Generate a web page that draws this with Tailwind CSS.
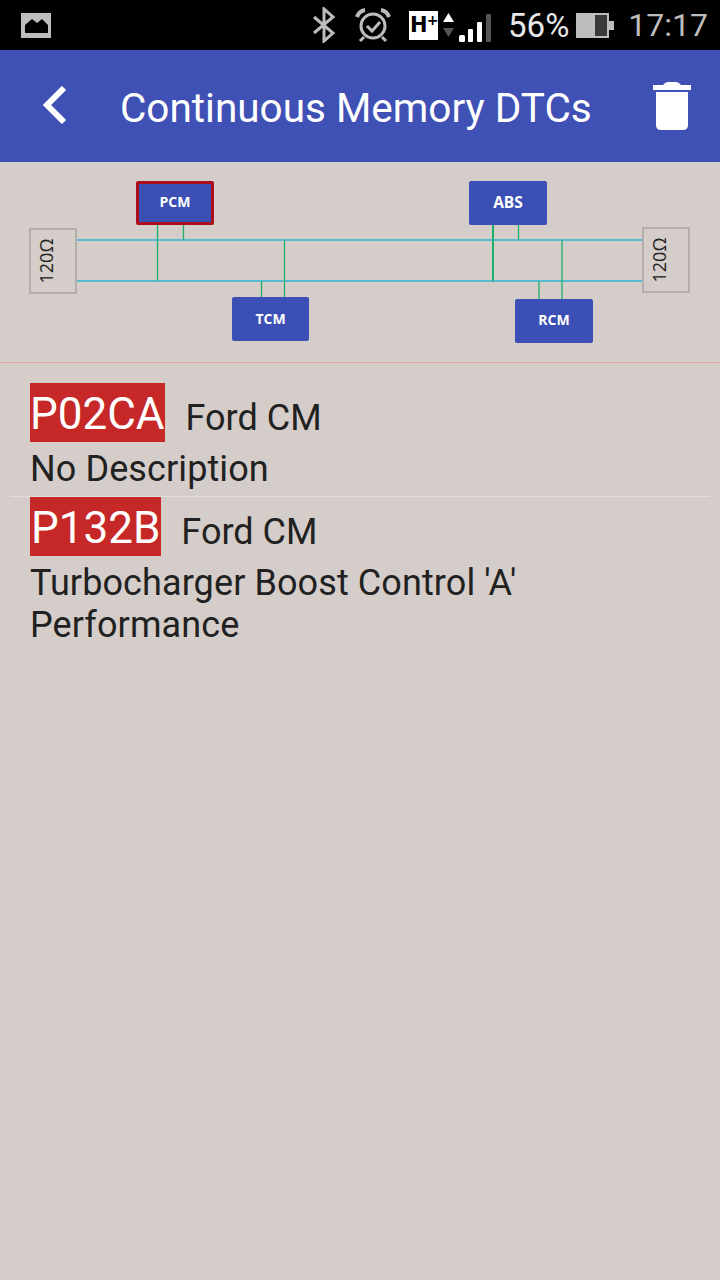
<!DOCTYPE html>
<html lang="en">
<head>
    <meta charset="UTF-8">
    <meta name="viewport" content="width=device-width, initial-scale=1.0">
    <title>Continuous Memory DTCs</title>
    <script src="https://cdn.jsdelivr.net/npm/@tailwindcss/browser@4"></script>
</head>
<body class="bg-[#d5cdc9] font-['Roboto',sans-serif] text-[#212121]">
<div class="w-[720px] h-[1280px] overflow-hidden flex flex-col">

    <!-- Status bar -->
    <div class="h-[50px] bg-black flex items-center pl-[21px] pr-[12px] text-[#bdbdbd]">
        <svg width="30" height="25" viewBox="0 0 30 25"><path fill="#bdbdbd" fill-rule="evenodd" d="M0 0h30v25H0zM4 20h23v-8l-6-6-5 4-5-4-7 6z"/></svg>
        <svg class="ml-auto" width="24" height="36" viewBox="0 0 24 36"><path fill="none" stroke="#bdbdbd" stroke-width="3" d="M2 10l19 16-9 8V2l9 8L2 26"/></svg>
        <svg class="ml-[19px]" width="36" height="36" viewBox="0 0 36 36" fill="none" stroke="#bdbdbd"><circle cx="18" cy="19" r="12" stroke-width="3"/><path stroke-width="3" d="M12 19l5 5 8-9M9 30l-4 4M27 30l4 4"/><path stroke-width="4" d="M2 10q2-6 8-7M34 10q-2-6-8-7"/></svg>
        <div class="ml-[18px] w-[29px] h-[29px] bg-white flex items-start pl-[1px] text-black font-['DejaVu_Sans',sans-serif] font-bold text-[21px] leading-[28px] tracking-[-1px]">H<span class="text-[14px] leading-[18px]">+</span></div>
        <svg class="ml-[5px]" width="11" height="30" viewBox="0 0 11 30"><path fill="#fff" d="M5.500 3L11 12H0z"/><path fill="#555" d="M0 18h11l-5.500 9z"/></svg>
        <svg class="ml-[5px] mt-[5px]" width="33" height="28" viewBox="0 0 33 28"><rect x="0" y="21" width="6" height="7" rx="1.500" fill="#fff"/><rect x="9" y="15" width="5" height="13" rx="1" fill="#fff"/><rect x="18" y="8" width="5" height="20" rx="1" fill="#fff"/><rect x="27" y="0" width="5" height="28" rx="1" fill="#555"/></svg>
        <span class="ml-[16px] text-[33px] leading-none text-[#e8e8e8]">56%</span>
        <svg class="ml-[7px]" width="38" height="25" viewBox="0 0 38 25"><rect width="33" height="25" fill="#bdbdbd"/><rect x="19" y="2" width="12" height="21" fill="#3a3a3a"/><rect x="33" y="8" width="5" height="9" fill="#bdbdbd"/></svg>
        <span class="ml-[14px] text-[32px] leading-none">17:17</span>
    </div>

    <!-- Toolbar -->
    <div class="h-[112px] bg-[#3f51b5] flex items-center text-white">
        <svg class="ml-[43px] mt-[-2px]" width="24" height="38" viewBox="0 0 24 38"><path fill="none" stroke="#fff" stroke-width="6" d="M21 2L4 19l17 17"/></svg>
        <h1 class="ml-[53px] mt-[5px] text-[40.500px] leading-none">Continuous Memory DTCs</h1>
        <svg class="ml-auto mr-[29px]" width="38" height="48" viewBox="0 0 38 48"><path fill="#fff" d="M0 3h10q2-3 5-3h8q3 0 5 3h10v5H0zM3 10h32v33q0 5-5 5H8q-5 0-5-5z"/></svg>
    </div>

    <!-- Bus diagram -->
    <div class="relative h-[201px] border-b border-[#e9a5a0] shrink-0">
        <svg class="absolute inset-0" width="720" height="200">
            <g stroke="#2fb4d0" stroke-width="1.500">
                <path d="M77 78h565M77 119h565"/>
            </g>
            <g stroke="#1fae6a" stroke-width="1.300">
                <path d="M157.500 63v56M183.500 63v15M284.500 78v57M261.500 119v16M518.500 63v15M562 78v59M539 119v18"/>
                <path stroke-width="2" d="M493 63v56"/>
            </g>
        </svg>
        <div class="absolute left-[136px] top-[19px] w-[78px] h-[44px] pb-[3px] rounded-[2px] bg-[#3b4fb4] border-[3px] border-[#ab0f1c] flex items-center justify-center text-white font-['Open_Sans',sans-serif] font-bold text-[14px]">PCM</div>
        <div class="absolute left-[232px] top-[135px] w-[77px] h-[44px] pb-[2px] rounded-[2px] bg-[#3b4fb4] flex items-center justify-center text-white font-['Open_Sans',sans-serif] font-bold text-[14px]">TCM</div>
        <div class="absolute left-[469px] top-[19px] w-[78px] h-[44px] rounded-[2px] bg-[#3b4fb4] flex items-center justify-center text-white font-['Open_Sans',sans-serif] font-bold text-[15.500px]">ABS</div>
        <div class="absolute left-[515px] top-[137px] w-[78px] h-[44px] pb-[3px] rounded-[2px] bg-[#3b4fb4] flex items-center justify-center text-white font-['Open_Sans',sans-serif] font-bold text-[14px]">RCM</div>
        <div class="absolute left-[29px] top-[66px] w-[48px] h-[66px] pr-[14px] border-2 border-[#b3aeab] flex items-center justify-center">
            <span class="-rotate-90 text-[18px] leading-none whitespace-nowrap font-['Open_Sans',sans-serif]">120Ω</span>
        </div>
        <div class="absolute left-[642px] top-[65px] w-[48px] h-[66px] pr-[14px] border-2 border-[#b3aeab] flex items-center justify-center">
            <span class="-rotate-90 text-[18px] leading-none whitespace-nowrap font-['Open_Sans',sans-serif]">120Ω</span>
        </div>
    </div>

    <!-- DTC list -->
    <div class="pt-[20px] px-[10px]">
        <div class="h-[114px] border-b border-[#e4dedb] px-[20px]">
            <div class="flex items-center h-[59px]">
                <span class="bg-[#c62828] text-white text-[44px] h-[59px] leading-[63px]">P02CA</span>
                <span class="ml-[21px] text-[36px] leading-none mt-[10px]">Ford CM</span>
            </div>
            <p class="text-[36px] leading-[42px] mt-[6px] tracking-[0.1px]">No Description</p>
        </div>
        <div class="px-[20px]">
            <div class="flex items-center h-[59px]">
                <span class="bg-[#c62828] text-white text-[44px] h-[59px] leading-[63px] px-[1px]">P132B</span>
                <span class="ml-[20px] text-[36px] leading-none mt-[10px]">Ford CM</span>
            </div>
            <p class="text-[36px] leading-[42px] mt-[6px] w-[600px] tracking-[0.1px]">Turbocharger Boost Control 'A' Performance</p>
        </div>
    </div>
</div>
</body>
</html>
